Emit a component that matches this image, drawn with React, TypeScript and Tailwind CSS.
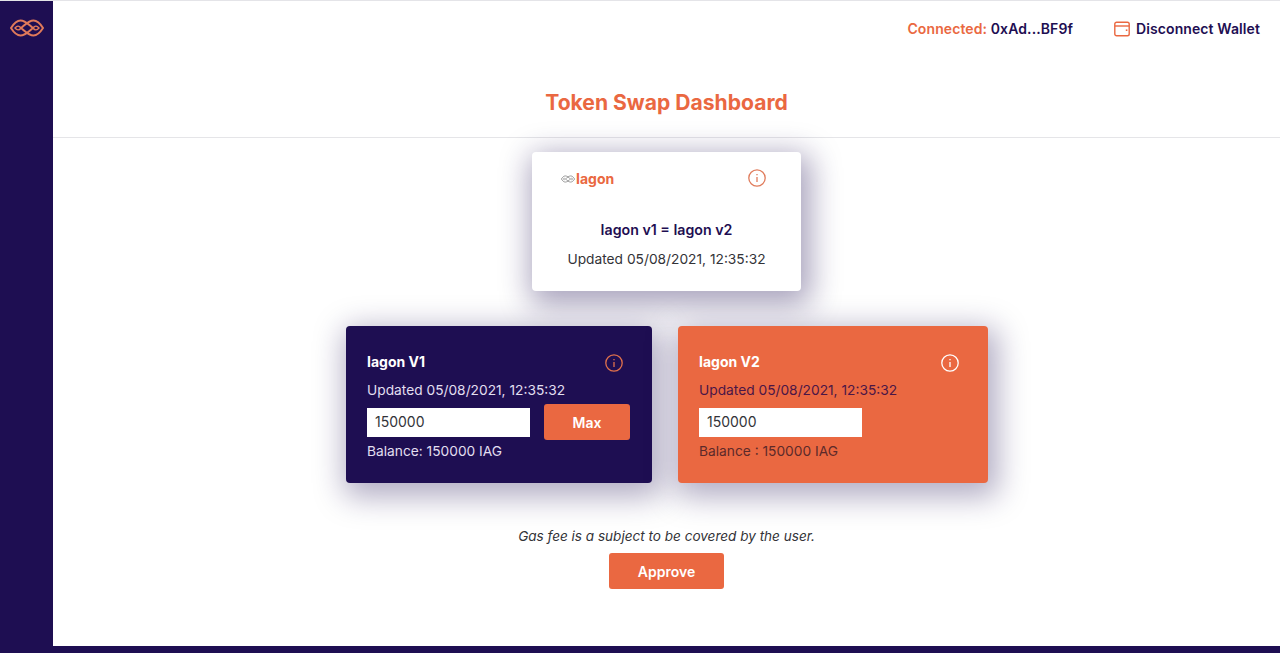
const font = { fontFamily: 'Inter, "Liberation Sans", sans-serif' };

function Knot({ className, stroke, width = 2 }: { className: string; stroke: string; width?: number }) {
  return (
    <svg viewBox="0 0 34 18" fill="none" stroke={stroke} strokeWidth={width} className={className}>
      <path d="M1 9C3.5 5 6.5 1.5 10.5 1.5C15.5 1.5 19 6 23 9C19 12 15.5 16.5 10.5 16.5C6.5 16.5 3.5 13 1 9Z" />
      <path d="M33 9C30.5 5 27.5 1.5 23.5 1.5C18.5 1.5 15 6 11 9C15 12 18.5 16.5 23.5 16.5C27.5 16.5 30.5 13 33 9Z" />
      <path d="M5 9C7 6.8 9 6.2 11 9C9 11.8 7 11.2 5 9Z" strokeWidth={width * 0.7} />
      <path d="M29 9C27 6.8 25 6.2 23 9C25 11.8 27 11.2 29 9Z" strokeWidth={width * 0.7} />
    </svg>
  );
}

function InfoIcon({ className, stroke }: { className: string; stroke: string }) {
  return (
    <svg viewBox="0 0 18 18" fill="none" stroke={stroke} strokeWidth="1.3" className={className}>
      <circle cx="9" cy="9" r="8.2" />
      <path d="M9 8V13" strokeWidth="1.3" />
      <path d="M9 5V6.2" strokeWidth="1.3" />
    </svg>
  );
}

function WalletIcon() {
  return (
    <svg viewBox="0 0 16 16" fill="none" stroke="#ea6841" strokeWidth="1.4" className="w-[16px] h-[16px]">
      <rect x="0.8" y="1.2" width="14.4" height="13.6" rx="1.8" />
      <path d="M0.8 5H15.2" />
      <path d="M12.6 8.4V10" strokeWidth="1.6" />
    </svg>
  );
}

export default function App() {
  return (
    <div style={font} className="flex flex-col h-[653px] w-[1280px] overflow-hidden bg-white">
      <div className="flex flex-1 min-h-0 border-t border-[#e4e4e8]">
        {/* Sidebar */}
        <aside className="w-[53px] shrink-0 bg-[#1e0e52] flex justify-center pt-[18px]">
          <Knot className="w-[34px] h-[18px]" stroke="#e07a5a" />
        </aside>

        <main className="flex-1 flex flex-col items-center min-w-0">
          {/* Header */}
          <header className="w-full h-[137px] shrink-0 border-b border-[#e5e5e8] flex flex-col">
            <div className="flex justify-end items-center gap-[41px] pr-[20px] pt-[18px] text-[14px] leading-[20px] tracking-[0.1px] font-semibold text-[#1e0e52]">
              <span>
                <span className="text-[#ea6841]">Connected:</span> 0xAd...BF9f
              </span>
              <span className="flex items-center gap-[6px]">
                <WalletIcon />
                Disconnect Wallet
              </span>
            </div>
            <h1 className="text-center text-[21.1px] leading-[28px] font-bold text-[#ea6841] mt-[50px]">
              Token Swap Dashboard
            </h1>
          </header>

          {/* Rate card */}
          <section className="w-[269px] h-[139px] mt-[14px] rounded-[4px] bg-white shadow-[4px_8px_30px_6px_rgba(30,14,82,0.38)] px-[29px] pt-[17px]">
            <div className="flex items-center justify-between pr-[6px]">
              <div className="flex items-center gap-[1px] text-[14px] leading-[20px] font-bold text-[#ea6841]">
                <Knot className="w-[14px] h-[8px]" stroke="#9a9a9a" width={2.4} />
                Iagon
              </div>
              <InfoIcon className="w-[18px] h-[18px] -mt-[2px]" stroke="#e07c5c" />
            </div>
            <p className="mt-[31px] text-center text-[14.2px] leading-[20px] font-semibold text-[#1e0e52]">
              Iagon v1 = Iagon v2
            </p>
            <p className="mt-[9px] text-center text-[13.75px] leading-[20px] text-[#333338] whitespace-nowrap">
              Updated 05/08/2021, 12:35:32
            </p>
          </section>

          {/* Token cards */}
          <div className="flex gap-[26px] mt-[35px] ml-[1px]">
            <section className="w-[306px] h-[157px] rounded-[4px] bg-[#1e0e52] shadow-[4px_8px_30px_6px_rgba(30,14,82,0.34)] pl-[21px] pr-[22px] pt-[26px]">
              <div className="flex justify-between items-center pr-[7px]">
                <h2 className="text-[14px] leading-[20px] font-bold text-white">Iagon V1</h2>
                <InfoIcon className="w-[18px] h-[18px] mt-[2px]" stroke="#e0714c" />
              </div>
              <p className="mt-[8px] text-[13.75px] leading-[20px] text-[#e2dff0]">Updated 05/08/2021, 12:35:32</p>
              <div className="flex items-center justify-between mt-[4px]">
                <div className="w-[163px] h-[29px] bg-white text-[14px] leading-[28px] pl-[8px] text-[#333338]">150000</div>
                <button className="w-[86px] h-[36px] rounded-[3px] bg-[#ea6841] text-white text-[14px] font-semibold">Max</button>
              </div>
              <p className="mt-[1px] text-[13.75px] leading-[20px] text-[#e2dff0]">Balance: 150000 IAG</p>
            </section>

            <section className="w-[310px] h-[157px] rounded-[4px] bg-[#ea6841] shadow-[4px_8px_30px_6px_rgba(30,14,82,0.34)] pl-[21px] pr-[29px] pt-[26px]">
              <div className="flex justify-between items-center">
                <h2 className="text-[14px] leading-[20px] font-bold text-white">Iagon V2</h2>
                <InfoIcon className="w-[18px] h-[18px] mt-[2px]" stroke="#ffffff" />
              </div>
              <p className="mt-[8px] text-[13.75px] leading-[20px] text-[#4a1647]">Updated 05/08/2021, 12:35:32</p>
              <div className="mt-[8px] w-[163px] h-[29px] bg-white text-[14px] leading-[28px] pl-[8px] text-[#333338]">150000</div>
              <p className="mt-[4px] text-[13.75px] leading-[20px] text-[#5c2a2a]">Balance : 150000 IAG</p>
            </section>
          </div>

          <p className="mt-[43px] text-[13.55px] leading-[20px] italic text-[#333338]">
            Gas fee is a subject to be covered by the user.
          </p>
          <button className="mt-[7px] w-[115px] h-[36px] rounded-[3px] bg-[#ea6841] text-white text-[14px] font-semibold">
            Approve
          </button>
        </main>
      </div>

      {/* Bottom bar */}
      <footer className="h-[7px] shrink-0 bg-[#1e0e52]" />
    </div>
  );
}
